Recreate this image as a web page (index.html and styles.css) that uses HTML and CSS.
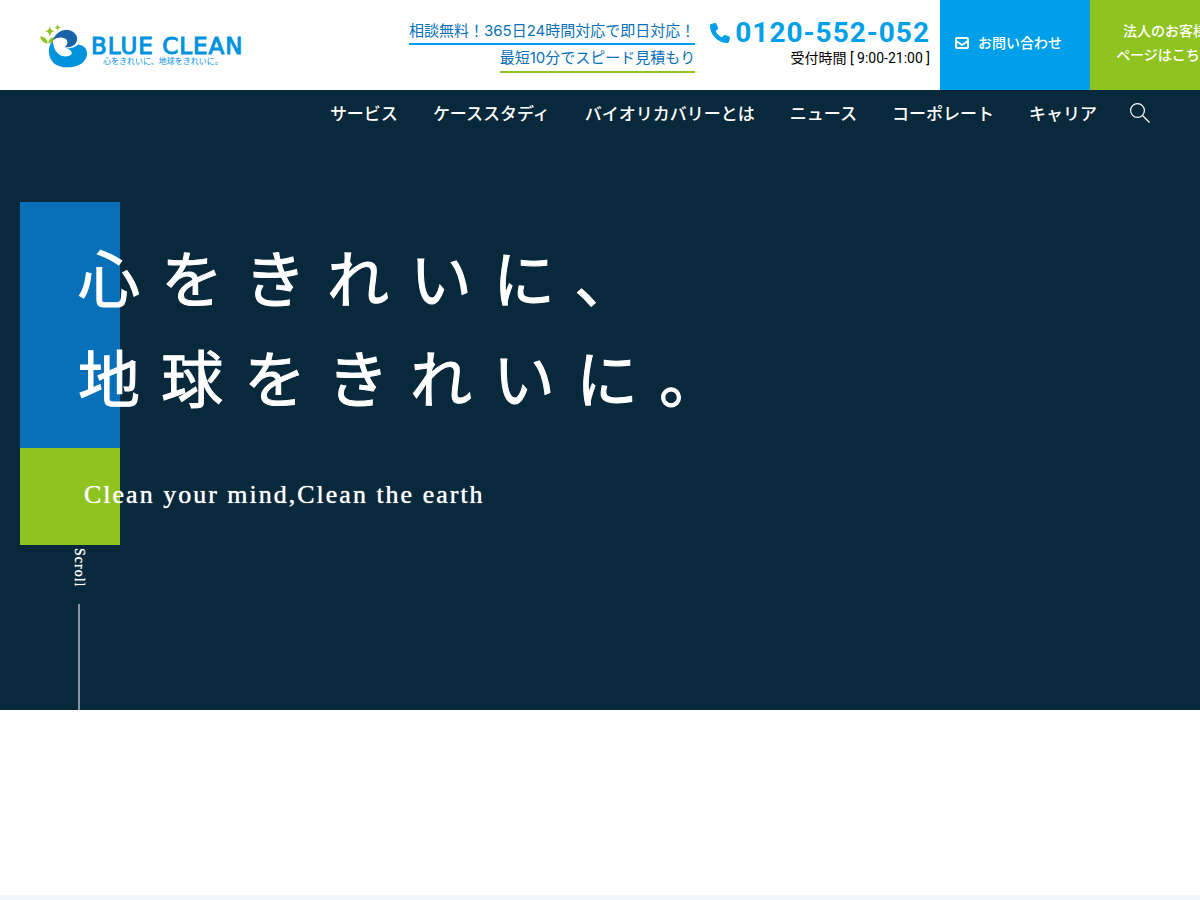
FILE: index.html
```html
<!DOCTYPE html>
<html lang="ja">
<head>
    <meta charset="UTF-8">
    <meta name="viewport" content="width=device-width, initial-scale=1.0">
    <title>BLUE CLEAN</title>
    <link rel="stylesheet" href="styles.css">
</head>
<body>
    <header class="header">
        <a class="logo" href="#">
            <svg class="logo-mark" viewBox="0 0 50 46" aria-hidden="true">
                <path fill="#8fc31f" d="M10 2Q10.500 7 15 7.500Q10.500 8 10 13Q9.500 8 5 7.500Q9.500 7 10 2Z"/>
                <path fill="#8fc31f" d="M18 0Q18.300 3.200 21.500 3.500Q18.300 3.800 18 7Q17.700 3.800 14.500 3.500Q17.700 3.200 18 0Z"/>
                <path fill="#8fc31f" d="M0 12.500Q7 13 8 20Q1 19 0 12.500ZM14.500 13.500Q14 19 8.500 20Q8.500 14 14.500 13.500Z"/>
                <path fill="#1762a8" d="M13 17C16 9 22 6 28 6C36 7 40 14 37 19C35 23 30 24 25 24C29 21 29 16 25 14.500C21 13 16 14 13 17Z"/>
                <path fill="#0092dc" d="M13 17C7 24 8 34 14 40C21 46 38 46 45 38C51 31 48 22 39 21C36 24 32 25 27 25C32 26 34 30 31 32C26 35 14 33 13 17Z"/>
            </svg>
            <span class="logo-text">
                <span class="logo-name">BLUE CLEAN</span>
                <span class="logo-tagline">心をきれいに、地球をきれいに。</span>
            </span>
        </a>
        <div class="header-right">
            <div class="lead">
                <p class="lead-line lead-blue">相談無料！365日24時間対応で即日対応！</p>
                <p class="lead-line lead-green">最短10分でスピード見積もり</p>
            </div>
            <div class="tel">
                <a class="tel-number" href="tel:0120552052">
                    <svg class="tel-icon" viewBox="0 0 512 512" aria-hidden="true">
                        <path fill="currentColor" d="M164.900 24.600c-7.700-18.600-28-28.500-47.400-23.200l-88 24C12.100 30.200 0 46 0 64c0 247.400 200.600 448 448 448 18 0 33.800-12.100 38.600-29.500l24-88c5.300-19.400-4.600-39.700-23.200-47.400l-96-40c-16.300-6.800-35.200-2.100-46.300 11.600L304.700 368C234.300 334.700 177.300 277.700 144 207.300l49.300-40.300c13.700-11.200 18.400-30 11.600-46.300l-40-96z"/>
                    </svg>
                    0120-552-052
                </a>
                <p class="tel-hours">受付時間 [ 9:00-21:00 ]</p>
            </div>
            <a class="header-btn btn-contact" href="#">
                <svg class="mail-icon" viewBox="0 0 14 12" fill="none" stroke="currentColor" stroke-width="2" stroke-linejoin="round" aria-hidden="true">
                    <rect x="1" y="1" width="12" height="10" rx="1"/>
                    <path d="M1 4L7 8L13 4"/>
                </svg>
                お問い合わせ
            </a>
            <a class="header-btn btn-corporate" href="#">法人のお客様<br>ページはこちら</a>
        </div>
    </header>

    <section class="hero">
        <nav class="nav">
            <a href="#">サービス</a>
            <a href="#">ケーススタディ</a>
            <a href="#">バイオリカバリーとは</a>
            <a href="#">ニュース</a>
            <a href="#">コーポレート</a>
            <a href="#">キャリア</a>
            <button class="search" type="button" aria-label="検索">
                <svg viewBox="0 0 20 20" fill="none" stroke="currentColor" stroke-width="1.200" aria-hidden="true">
                    <circle cx="7.500" cy="7.500" r="6.900"/>
                    <path d="M12.500 12.500L19.500 19.500"/>
                </svg>
            </button>
        </nav>
        <div class="hero-copy">
            <h1 class="hero-title">心をきれいに、<br>地球をきれいに。</h1>
            <p class="hero-sub">Clean your mind,Clean the earth</p>
        </div>
        <a class="scroll" href="#about">Scroll</a>
    </section>

    <main class="about" id="about"></main>
</body>
</html>
```

FILE: styles.css
```css
* {
    box-sizing: border-box;
}
body {
    margin: 0;
    min-height: 100vh;
    display: flex;
    flex-direction: column;
    overflow-x: hidden;
    background-color: #fff;
    color: #000;
    font-family: Roboto, "Noto Sans CJK JP", sans-serif;
    font-size: 14px;
}
p, h1 {
    margin: 0;
}
a {
    color: inherit;
    text-decoration: none;
}

/* header */
.header {
    display: flex;
    justify-content: space-between;
    min-width: 1240px;
    height: 90px;
    padding-left: 40px;
}
.logo {
    display: flex;
    align-items: flex-start;
    gap: 2px;
    padding-top: 24px;
}
.logo-mark {
    width: 49px;
    height: 45px;
}
.logo-text {
    display: flex;
    flex-direction: column;
    color: #0092dc;
    padding-top: 10px;
}
.logo-name {
    font-family: "DejaVu Sans", sans-serif;
    font-size: 23px;
    line-height: 24px;
    letter-spacing: 1px;
    -webkit-text-stroke: 1px #0092dc;
}
.logo-tagline {
    padding-left: 12px;
    font-family: "Liberation Serif", "Noto Sans CJK JP", serif;
    font-size: 8px;
    line-height: 8px;
}
.header-right {
    display: flex;
}
.lead {
    display: flex;
    flex-direction: column;
    align-items: flex-end;
    padding-top: 18px;
    margin-right: 15px;
}
.lead-line {
    font-family: Inter, "Noto Sans CJK JP", sans-serif;
    font-size: 15px;
    line-height: 25px;
    color: #0870b8;
}
.lead-blue {
    border-bottom: 2px solid #009fe9;
}
.lead-green {
    padding-bottom: 1px;
    border-bottom: 2px solid #8fc31f;
}
.tel {
    padding-top: 17px;
    margin-right: 10px;
    text-align: right;
}
.tel-number {
    display: flex;
    align-items: center;
    gap: 5px;
    color: #009fe9;
    font-size: 28px;
    font-weight: bold;
    line-height: 32px;
    letter-spacing: 1px;
}
.tel-icon {
    width: 20px;
    height: 20px;
}
.tel-hours {
    line-height: 18px;
}
.header-btn {
    display: flex;
    align-items: center;
    justify-content: center;
    width: 150px;
    padding-bottom: 4px;
    color: #fff;
    font-weight: 500;
    line-height: 24px;
    text-align: center;
}
.btn-contact {
    justify-content: flex-start;
    gap: 9px;
    padding-left: 15px;
    background-color: #009fe9;
}
.btn-corporate {
    background-color: #8fc31f;
}
.mail-icon {
    width: 14px;
    height: 12px;
}

/* hero */
.hero {
    position: relative;
    height: 620px;
    background-color: #08283b;
    color: #fff;
}
.nav {
    display: flex;
    justify-content: flex-end;
    align-items: center;
    gap: 35px;
    height: 46px;
    padding-right: 50px;
    font-size: 17px;
}
.nav a {
    padding-bottom: 2px;
    font-weight: 500;
}
.search {
    width: 20px;
    height: 20px;
    margin-left: -2px;
    padding: 0;
    border: 0;
    background: none;
    color: #fff;
}
.search svg {
    display: block;
}
.hero-copy {
    margin: 66px 0 0 20px;
    padding: 30px 0 33px 58px;
    background: linear-gradient(#0870b8 246px, #8fc31f 246px) left top / 100px 100% no-repeat;
}
.hero-title {
    font-size: 62px;
    font-weight: 400;
    line-height: 100px;
    letter-spacing: 21px;
    -webkit-text-stroke: 1px #fff;
}
.hero-sub {
    padding: 45px 0 0 6px;
    font-family: "Liberation Serif", serif;
    font-size: 26px;
    line-height: 35px;
    letter-spacing: 2px;
    text-shadow: 0 0 1px #fff;
}
.scroll {
    position: absolute;
    bottom: 0;
    left: 70px;
    display: flex;
    align-items: center;
    gap: 17px;
    height: 162px;
    font-family: "Liberation Serif", serif;
    font-size: 14px;
    line-height: 18px;
    letter-spacing: 1px;
    text-shadow: 0 0 1px #fff;
    writing-mode: vertical-rl;
}
.scroll::after {
    content: "";
    flex: 1;
    width: 2px;
    background-color: #84939d;
}

.about {
    flex: 1;
    margin-top: 185px;
    background-color: #f1f6fa;
}
```
